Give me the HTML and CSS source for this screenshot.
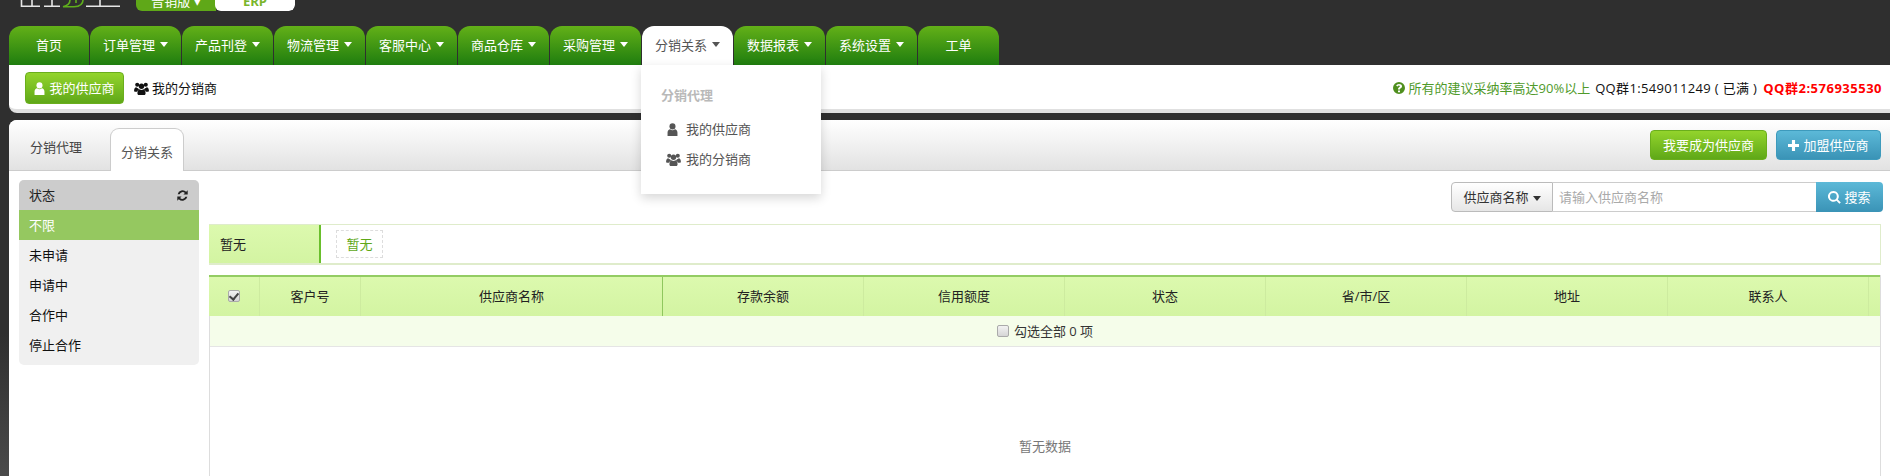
FILE: index.html
```html
<!DOCTYPE html>
<html lang="zh-CN">
<head>
  <meta charset="UTF-8" />
  <title>分销关系</title>
  <link rel="stylesheet" href="styles.css">
</head>
<body>

  <svg class="icon-defs" width="0" height="0" aria-hidden="true">
    <symbol id="i-user" viewBox="0 0 12 14">
      <circle cx="6" cy="3.6" r="3.3" />
      <path d="M0.6 14V10.4C0.6 8.2 2 6.9 3.4 6.7C4 7.4 5 7.8 6 7.8S8 7.4 8.6 6.7C10 6.9 11.4 8.2 11.4 10.4V14Z" />
    </symbol>
    <symbol id="i-users" viewBox="0 0 16 14">
      <circle cx="3.4" cy="3" r="2.2" />
      <circle cx="12.6" cy="3" r="2.2" />
      <circle cx="8" cy="4.6" r="2.9" />
      <path d="M0 9.6C0 7 1 5.8 2.4 5.6C2.9 6.2 3.5 6.6 4.3 6.7C4.6 7.4 5 7.9 5.5 8.2C4.4 8.7 3.6 9.6 3.4 10.4H1C0.4 10.4 0 10.1 0 9.6Z" />
      <path d="M16 9.6C16 7 15 5.8 13.6 5.6C13.1 6.2 12.5 6.6 11.7 6.7C11.4 7.4 11 7.9 10.5 8.2C11.6 8.7 12.4 9.6 12.6 10.4H15C15.6 10.4 16 10.1 16 9.6Z" />
      <path d="M3.6 12.4C3.6 9.6 4.6 8 6 7.7C6.5 8.2 7.2 8.6 8 8.6S9.5 8.2 10 7.7C11.4 8 12.4 9.6 12.4 12.4C12.4 13.4 11.8 14 10.9 14H5.1C4.2 14 3.6 13.4 3.6 12.4Z" />
    </symbol>
    <symbol id="i-refresh" viewBox="0 0 14 14">
      <path d="M1.8 5.6A5.4 5.4 0 0 1 11 3L12.6 1.4V6H8L9.6 4.4A3.4 3.4 0 0 0 3.9 5.6Z" />
      <path d="M12.2 8.4A5.4 5.4 0 0 1 3 11L1.4 12.6V8H6L4.4 9.6A3.4 3.4 0 0 0 10.1 8.4Z" />
    </symbol>
    <symbol id="i-help" viewBox="0 0 12 12">
      <path fill-rule="evenodd" d="M6 0A6 6 0 1 1 6 12A6 6 0 1 1 6 0ZM5 8.6V10.2H7V8.6ZM6 2C4.6 2 3.6 2.7 3.2 3.8L4.6 4.5C4.9 3.9 5.3 3.6 5.9 3.6C6.5 3.6 6.9 3.9 6.9 4.3C6.9 4.7 6.6 4.9 6.1 5.2C5.4 5.6 5 6.1 5 6.9V7.6H7V7.1C7 6.8 7.2 6.6 7.7 6.3C8.4 5.9 9 5.3 9 4.3C9 2.9 7.6 2 6 2Z" />
    </symbol>
    <symbol id="i-plus" viewBox="0 0 12 12">
      <path d="M4.3 0H7.7V4.3H12V7.7H7.7V12H4.3V7.7H0V4.3H4.3Z" />
    </symbol>
    <symbol id="i-search" viewBox="0 0 13 13">
      <path fill-rule="evenodd" d="M5.4 0A5.4 5.4 0 0 1 9.8 8.5L12.8 11.4L11.4 12.8L8.5 9.8A5.4 5.4 0 1 1 5.4 0ZM5.4 2A3.4 3.4 0 1 0 5.4 8.8A3.4 3.4 0 1 0 5.4 2Z" />
    </symbol>
  </svg>

  <header class="topbar">
    <svg class="logo" width="100" height="8" viewBox="0 0 100 8" aria-hidden="true">
      <path d="M1.5 0V6.2H20M12 0V6.2M24 6.2H40M32 0V6.2M66 6.2H100M80 0V6.2" fill="none" stroke="#e6e6e6" stroke-width="1.6" />
      <path d="M50 0C50 3 48 5.5 43 6.8H54C60 6.4 63 4 63 0M56 0V3" fill="none" stroke="#5fae1c" stroke-width="1.6" />
    </svg>
    <div class="version">
      <span class="version-on">普销版 ▾</span>
      <span class="version-off">ERP</span>
    </div>
  </header>

  <nav class="main-nav">
    <a class="nav-tab tab-home">首页</a>
    <a class="nav-tab">订单管理<i class="caret"></i></a>
    <a class="nav-tab">产品刊登<i class="caret"></i></a>
    <a class="nav-tab">物流管理<i class="caret"></i></a>
    <a class="nav-tab">客服中心<i class="caret"></i></a>
    <a class="nav-tab">商品仓库<i class="caret"></i></a>
    <a class="nav-tab">采购管理<i class="caret"></i></a>
    <div class="nav-tab active">分销关系<i class="caret"></i>
      <div class="dropdown">
        <div class="dropdown-title">分销代理</div>
        <a class="dropdown-item"><svg class="icon icon-user"><use href="#i-user" /></svg>我的供应商</a>
        <a class="dropdown-item"><svg class="icon icon-users"><use href="#i-users" /></svg>我的分销商</a>
      </div>
    </div>
    <a class="nav-tab">数据报表<i class="caret"></i></a>
    <a class="nav-tab">系统设置<i class="caret"></i></a>
    <a class="nav-tab tab-last">工单</a>
  </nav>

  <div class="sub-nav">
    <a class="btn btn-green sub-btn"><svg class="icon icon-user"><use href="#i-user" /></svg>我的供应商</a>
    <a class="sub-link"><svg class="icon icon-users"><use href="#i-users" /></svg>我的分销商</a>
    <div class="notice">
      <svg class="icon icon-help"><use href="#i-help" /></svg>
      <span class="notice-green">所有的建议采纳率高达90%以上</span>
      <span class="notice-qq">QQ群1:549011249 ( 已满 )</span>
      <strong class="notice-red">QQ群2:576935530</strong>
    </div>
  </div>

  <main class="panel">
    <div class="panel-head">
      <a class="panel-tab">分销代理</a>
      <a class="panel-tab active">分销关系</a>
      <div class="panel-actions">
        <a class="btn btn-green action-btn">我要成为供应商</a>
        <a class="btn btn-blue action-btn"><svg class="icon icon-plus"><use href="#i-plus" /></svg>加盟供应商</a>
      </div>
    </div>

    <div class="panel-body">
      <aside class="side-list">
        <div class="side-head">状态<svg class="icon icon-refresh"><use href="#i-refresh" /></svg></div>
        <a class="side-item selected">不限</a>
        <a class="side-item">未申请</a>
        <a class="side-item">申请中</a>
        <a class="side-item">合作中</a>
        <a class="side-item">停止合作</a>
      </aside>

      <section class="content">
        <div class="search-bar">
          <button class="search-type">供应商名称<i class="caret"></i></button>
          <input class="search-input" type="text" placeholder="请输入供应商名称" />
          <button class="search-btn"><svg class="icon icon-search"><use href="#i-search" /></svg>搜索</button>
        </div>

        <div class="filter-bar">
          <div class="filter-label">暂无</div>
          <div class="filter-values"><a class="filter-tag">暂无</a></div>
        </div>

        <div class="data-table">
          <div class="table-head">
            <div class="th"><span class="check checked"></span></div>
            <div class="th">客户号</div>
            <div class="th th-strong">供应商名称</div>
            <div class="th">存款余额</div>
            <div class="th">信用额度</div>
            <div class="th">状态</div>
            <div class="th">省/市/区</div>
            <div class="th">地址</div>
            <div class="th">联系人</div>
            <div class="th"></div>
          </div>
          <div class="select-row"><span class="check"></span>勾选全部 0 项</div>
          <div class="empty">暂无数据</div>
        </div>
      </section>
    </div>
  </main>

</body>
</html>
```

FILE: styles.css
```css
* {
  box-sizing: border-box;
  margin: 0;
  padding: 0;
}

body {
  height: 476px;
  overflow: hidden;
  background: linear-gradient(#2f2f2f 70%, #4a4a4a);
  color: #222;
  font-family: "Open Sans", "Noto Sans CJK SC", sans-serif;
  font-size: 13px;
  line-height: 18px;
}

.icon-defs {
  position: absolute;
}

.icon {
  fill: currentColor;
  flex: none;
}

.icon-user {
  width: 11px;
  height: 13px;
}

.icon-users {
  width: 15px;
  height: 13px;
}

.icon-help {
  width: 12px;
  height: 12px;
  color: #4f8f1e;
}

.icon-plus {
  width: 11px;
  height: 11px;
}

.icon-search {
  width: 13px;
  height: 13px;
}

.icon-refresh {
  width: 13px;
  height: 13px;
}

.caret {
  display: inline-block;
  margin-left: 5px;
  border-top: 5px solid currentColor;
  border-left: 4px solid transparent;
  border-right: 4px solid transparent;
  vertical-align: 2px;
}

/* Top bar, cut by the top of the window */
.topbar {
  display: flex;
  height: 26px;
  padding-left: 20px;
}

.logo {
  display: block;
}

.version {
  display: flex;
  height: 11px;
  margin-left: 16px;
  overflow: hidden;
  border-radius: 0 0 6px 6px;
  text-align: center;
  line-height: 3px;
}

.version-on {
  width: 80px;
  background: #5fa818;
  color: #fff;
}

.version-off {
  width: 80px;
  background: #fff;
  border-radius: 0 0 6px 6px;
  margin-left: -1px;
  color: #7ab52c;
  font-weight: bold;
}

/* Main menu */
.main-nav {
  display: flex;
  gap: 1px;
  height: 39px;
  padding-left: 9px;
}

.nav-tab {
  position: relative;
  display: flex;
  align-items: center;
  justify-content: center;
  width: 91px;
  padding-bottom: 2px;
  border-radius: 12px 12px 0 0;
  background: linear-gradient(#63b018, #1f7d0f);
  color: #fff;
  white-space: nowrap;
}

.tab-home {
  width: 80px;
}

.tab-last {
  width: 81px;
}

.nav-tab.active {
  background: #fff;
  color: #555;
}

.dropdown {
  position: absolute;
  top: 39px;
  left: -1px;
  z-index: 10;
  width: 180px;
  height: 129px;
  padding: 21px 20px 0;
  background: #fff;
  box-shadow: 0 4px 10px rgba(0, 0, 0, 0.16);
}

.dropdown-title {
  margin-bottom: 10px;
  color: #b9b9b9;
  font-weight: bold;
}

.dropdown-item {
  display: flex;
  align-items: center;
  gap: 8px;
  height: 30px;
  padding-left: 6px;
  color: #555;
}

.dropdown-item .icon-users {
  margin-left: -1px;
  margin-right: -3px;
}

/* Second level bar */
.sub-nav {
  display: flex;
  align-items: center;
  height: 48px;
  margin-left: 9px;
  padding: 2px 8px 0 16px;
  background: #fff;
  border-bottom: 4px solid #e0e0e0;
  border-radius: 0 0 0 8px;
}

.btn {
  display: flex;
  align-items: center;
  justify-content: center;
  gap: 4px;
  border-radius: 4px;
  color: #fff;
}

.btn-green {
  background: linear-gradient(#93d42c, #5fa818);
  border: 1px solid #6aae1c;
}

.btn-blue {
  background: linear-gradient(#5cb9d8, #3a93b6);
  border: 1px solid #3d9abc;
}

.sub-btn {
  width: 99px;
  height: 32px;
}

.sub-link {
  display: flex;
  align-items: center;
  gap: 3px;
  margin-left: 10px;
  color: #111;
}

.notice {
  display: flex;
  align-items: center;
  gap: 4px;
  margin-left: auto;
}

.notice-green {
  color: #4f9a2a;
  margin-right: 1px;
}

.notice-qq {
  color: #111;
  margin-right: 2px;
  letter-spacing: 0.35px;
}

.notice-red {
  color: #f00;
  letter-spacing: 0.5px;
}

/* Main panel */
.panel {
  height: 356px;
  margin: 7px 0 0 9px;
  background: #fff;
  border-radius: 8px 0 0 0;
}

.panel-head {
  display: flex;
  height: 51px;
  background: linear-gradient(#fff, #e2e2e2);
  border-bottom: 1px solid #ccc;
  border-radius: 8px 0 0 0;
}

.panel-tab {
  display: flex;
  align-items: center;
  justify-content: center;
  width: 94px;
  margin-right: 7px;
  padding-top: 4px;
  color: #444;
}

.panel-tab.active {
  width: 74px;
  height: 43px;
  margin: 8px 0 -1px;
  padding: 4px 0 0;
  background: #fff;
  border: 1px solid #ccc;
  border-bottom: 0;
  border-radius: 9px 9px 0 0;
  color: #555;
}

.panel-actions {
  display: flex;
  gap: 9px;
  align-self: flex-start;
  margin: 10px 9px 0 auto;
}

.action-btn {
  height: 30px;
}

.btn-green.action-btn {
  width: 117px;
}

.btn-blue.action-btn {
  width: 105px;
}

.panel-body {
  display: flex;
  align-items: flex-start;
  padding-left: 10px;
}

/* Status list on the left */
.side-list {
  width: 180px;
  margin-top: 9px;
  overflow: hidden;
  background: #f0f0f0;
  border-radius: 5px;
  padding-bottom: 5px;
  color: #111;
}

.side-head,
.side-item {
  display: flex;
  align-items: center;
  height: 30px;
  padding: 0 10px;
}

.side-head {
  justify-content: space-between;
  background: #ccc;
  color: #222;
}

.side-item.selected {
  background: #95c860;
  color: #fff;
}

/* Content column */
.content {
  width: 1674px;
  margin-left: 10px;
  padding-top: 11px;
}

.search-bar {
  display: flex;
  justify-content: flex-end;
  height: 30px;
}

.search-type {
  width: 102px;
  border: 1px solid #bbb;
  border-radius: 4px 0 0 4px;
  background: linear-gradient(#fff, #e6e6e6);
  color: #333;
  font: inherit;
}

.search-type .caret {
  margin-left: 4px;
  vertical-align: 1px;
}

.search-input {
  width: 263px;
  padding: 0 6px;
  border: 1px solid #ccc;
  border-left: 0;
  border-right: 0;
  font: inherit;
  outline: none;
}

.search-input::placeholder {
  color: #aaa;
}

.search-btn {
  display: flex;
  align-items: center;
  justify-content: center;
  gap: 3px;
  width: 67px;
  border: 0;
  border-radius: 0 4px 4px 0;
  background: linear-gradient(#5cb9d8, #3a93b6);
  color: #fff;
  font: inherit;
}

.filter-bar {
  display: flex;
  height: 41px;
  margin: 12px 2px 0 0;
  border: 1px solid #dfeccb;
  border-bottom-width: 2px;
  border-left: 0;
}

.filter-label {
  display: flex;
  align-items: center;
  width: 112px;
  padding-left: 11px;
  background: linear-gradient(#dcf9ae, #d3f4a2);
  border-right: 2px solid #69bf2c;
  color: #222;
}

.filter-values {
  display: flex;
  align-items: center;
  padding-left: 15px;
}

.filter-tag {
  display: flex;
  align-items: center;
  justify-content: center;
  width: 47px;
  height: 28px;
  border: 1px dashed #ddd;
  color: #5fa818;
}

/* Table */
.data-table {
  height: 210px;
  margin: 10px 2px 0 0;
  border: 1px solid #ddd;
  border-top: 0;
  border-bottom: 0;
}

.table-head {
  display: grid;
  grid-template-columns: 51px 101px 302px repeat(6, 201px) 1fr;
  height: 41px;
  margin-left: -1px;
  border-top: 2px solid #93cc63;
  background: linear-gradient(#dcf9ae, #d3f4a2);
  color: #222;
}

.th {
  display: flex;
  align-items: center;
  justify-content: center;
  border-right: 1px solid #cdeb9f;
  padding-bottom: 1px;
}

.th-strong {
  border-right-color: #8fc75e;
}

.th:last-child {
  border-right: 0;
}

.check {
  position: relative;
  display: inline-block;
  width: 12px;
  height: 12px;
  background: linear-gradient(#f2f2f2, #d6d6d6);
  border: 1px solid #aaa;
  border-radius: 2px;
}

.check.checked::after {
  content: "";
  position: absolute;
  left: 2px;
  top: 0;
  width: 4px;
  height: 7px;
  border: solid #444;
  border-width: 0 2px 2px 0;
  transform: rotate(40deg);
}

.select-row {
  display: flex;
  align-items: center;
  justify-content: center;
  gap: 5px;
  height: 31px;
  background: #f5fdea;
  border-bottom: 1px solid #e5e5e5;
  color: #333;
}

.empty {
  padding-top: 90px;
  text-align: center;
  color: #777;
}
```
